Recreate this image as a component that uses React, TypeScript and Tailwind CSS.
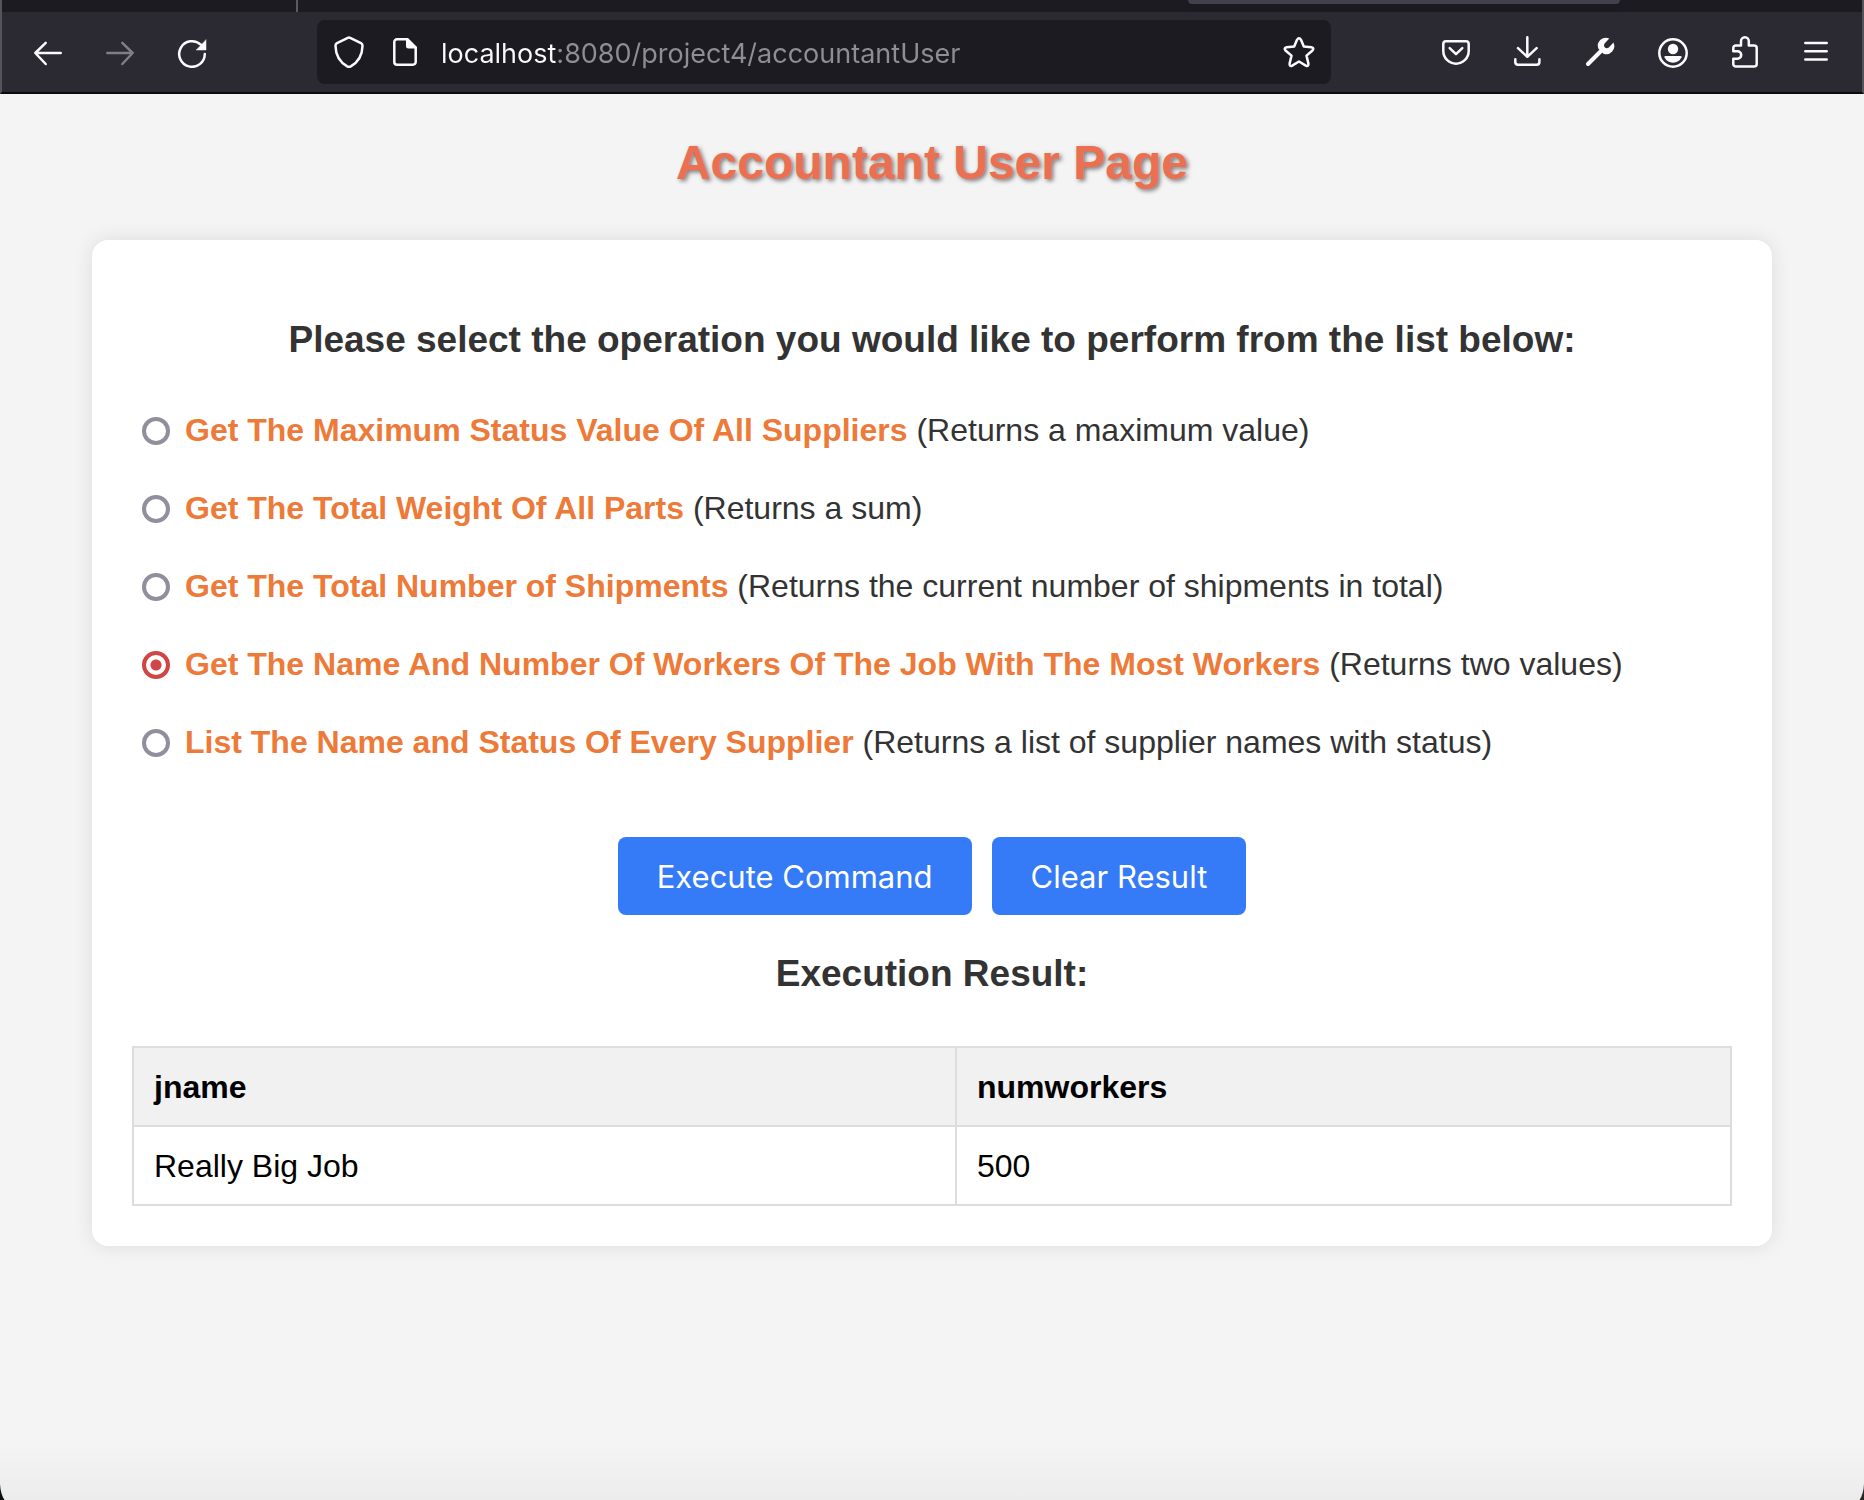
import { useState, type ReactNode } from "react";

const operations = [
  { id: "max-status", name: "Get The Maximum Status Value Of All Suppliers", note: "(Returns a maximum value)" },
  { id: "total-weight", name: "Get The Total Weight Of All Parts", note: "(Returns a sum)" },
  { id: "total-shipments", name: "Get The Total Number of Shipments", note: "(Returns the current number of shipments in total)" },
  { id: "most-workers", name: "Get The Name And Number Of Workers Of The Job With The Most Workers", note: "(Returns two values)" },
  { id: "list-suppliers", name: "List The Name and Status Of Every Supplier", note: "(Returns a list of supplier names with status)" },
];

function Icon({ children }: { children: ReactNode }) {
  return (
    <svg
      viewBox="0 0 32 32"
      className="size-8 shrink-0"
      fill="none"
      stroke="currentColor"
      strokeWidth="2.5"
      strokeLinecap="round"
      strokeLinejoin="round"
      aria-hidden="true"
    >
      {children}
    </svg>
  );
}

function ToolButton({ label, disabled, children }: { label: string; disabled?: boolean; children: ReactNode }) {
  return (
    <button
      type="button"
      aria-label={label}
      disabled={disabled}
      className="flex h-16 w-18 items-center justify-center text-[#fbfbfe] disabled:text-[#7f7e85]"
    >
      <Icon>{children}</Icon>
    </button>
  );
}

function BrowserBar() {
  return (
    <header className="border-x-2 border-b-2 border-x-[#55545b] border-b-[#0c0c0d] bg-[#2b2a33]">
      <div className="flex h-3 items-start bg-[#1c1b22]">
        <div className="h-3 w-74 border-r-2 border-[#5b5a62]" />
        <div className="flex-1" />
        <div className="mr-[242px] h-1 w-108 rounded-b-lg bg-[#42414d] shadow-md" />
      </div>
      <div className="flex h-20 items-center px-[10px]">
        <ToolButton label="Back">
          <path d="M28.7 17H3.5M13.7 6.8 3.3 17l10.4 11" />
        </ToolButton>
        <ToolButton label="Forward" disabled>
          <path d="M3.3 17h25.2M18.3 6.8 28.7 17 18.3 28" />
        </ToolButton>
        <ToolButton label="Reload">
          <path d="M28.8 18a12.8 12.8 0 1 1-4-9.3" />
          <path d="M30 4v10H20.500z" fill="currentColor" stroke="currentColor" strokeWidth="0.5" />
        </ToolButton>
        <div className="mx-[89px] flex h-16 min-w-0 flex-1 items-center rounded-lg bg-[#1c1b22] px-4 text-[#fbfbfe]">
          <button type="button" aria-label="Tracking protection">
            <Icon>
              <path d="M14.800 1.900q1.200-.8 2.400 0l10.800 5.300q1.600.9 1.500 2.800c-.2 8.500-4 16-11.700 20.300q-1.800.8-3.600 0C6.500 26 2.700 18.500 2.500 10q-.1-1.900 1.500-2.800z" />
            </Icon>
          </button>
          <button type="button" aria-label="Site information" className="ml-6">
            <Icon>
              <path d="M17 3.300H8a2.700 2.700 0 0 0-2.700 2.700v20A2.700 2.700 0 0 0 8 28.700h16a2.700 2.700 0 0 0 2.700-2.700V12" />
              <path d="M17 2h2l9 9v1.500h-8.500A2.500 2.500 0 0 1 17 10z" fill="currentColor" stroke="none" />
            </Icon>
          </button>
          <input
            aria-label="Address"
            defaultValue="localhost:8080/project4/accountantUser"
            className="ml-5 min-w-0 flex-1 bg-linear-to-r from-[#fbfbfe] from-[115px] to-[#8f8e94] to-[115px] bg-clip-text pt-[3px] font-['Inter',sans-serif] text-[27px] leading-10 text-transparent outline-none"
          />
          <button type="button" aria-label="Bookmark this page">
            <Icon>
              <path d="M14 3.800q2-3.200 4 0l2.800 6.700 7.500.8q3.300.6 1.200 3.200l-6 5.100 1.900 8q.2 3.400-2.600 2L16 25.500l-6.800 4.100q-2.800 1.400-2.600-2l1.900-8-6-5.100q-2.100-2.600 1.200-3.200l7.500-.8z" />
            </Icon>
          </button>
        </div>
        <ToolButton label="Save to Pocket">
          <path d="M6 5.300h20a2.700 2.700 0 0 1 2.700 2.700v7a12.700 12.700 0 0 1-25.400 0V8A2.700 2.700 0 0 1 6 5.300z" />
          <path d="m9.700 12.200 6.300 6 6.300-6" />
        </ToolButton>
        <ToolButton label="Downloads">
          <path d="M15.300 1.300V20M6 12.200l9.300 8.600 9.300-8.600M3.300 23.300V26A2.700 2.700 0 0 0 6 28.700h18.700a2.700 2.700 0 0 0 2.700-2.700v-2.700" />
        </ToolButton>
        <ToolButton label="Developer tools">
          <path d="M4 28 17 15" strokeWidth="4" />
          <path
            d="M25.300 2.600 20.800 7.200q-1.300 1.600-.6 3.400.7 1.600 2.600 1.700 1.300 0 2.300-1L29.400 6.600A8 8 0 0 1 19.500 17.700L14.300 12.500A8 8 0 0 1 25.300 2.600z"
            fill="currentColor"
            stroke="none"
          />
        </ToolButton>
        <ToolButton label="Account">
          <circle cx="17" cy="17" r="13.700" />
          <circle cx="17" cy="13" r="5.200" fill="currentColor" stroke="none" />
          <path d="M9.500 20h15q1.500 0 1 1.300-2.500 5.400-8.500 5.400t-8.500-5.400Q8 20 9.500 20z" fill="currentColor" stroke="none" />
        </ToolButton>
        <ToolButton label="Extensions">
          <path d="M13 9.500V5.200a3.900 3.900 0 0 1 7.800 0v4.300h5.400a2.500 2.500 0 0 1 2.500 2.500v16a2.500 2.500 0 0 1-2.500 2.500H7.800A2.500 2.500 0 0 1 5.300 28v-5.300H9.500a3.700 3.700 0 0 0 0-7.400H5.300V12a2.500 2.500 0 0 1 2.500-2.500z" />
        </ToolButton>
        <ToolButton label="Open menu">
          <path d="M5.300 7h21.400M5.300 15.300h21.400M5.300 23.600h21.400" />
        </ToolButton>
      </div>
    </header>
  );
}

const buttonClass = "h-[78px] rounded-lg bg-[#357af6] px-[39px] pt-[2px] font-['Inter',sans-serif] text-[31px] text-white";

export default function App() {
  const [selected, setSelected] = useState("most-workers");

  return (
    <div className="relative flex min-h-screen flex-col bg-[#f4f4f4] font-['Liberation_Sans',Arial,sans-serif] text-[32px] text-[#333]">
      <BrowserBar />
      <main className="flex-1 px-23 pt-[41px]">
        <h1 className="text-center text-5xl leading-14 font-bold text-[#eb7051] [text-shadow:2px_2px_4px_rgba(0,0,0,0.5)]">
          Accountant User Page
        </h1>
        <section className="mt-[49px] rounded-2xl bg-white px-10 pt-[78px] pb-10 shadow-[0_0_20px_rgba(0,0,0,0.1)]">
          <form onSubmit={(e) => e.preventDefault()}>
            <h2 className="text-center text-[37px] leading-11 font-bold">
              Please select the operation you would like to perform from the list below:
            </h2>
            <div className="mt-[29px]">
              {operations.map((op) => (
                <div key={op.id} className="flex h-[78px] items-center pl-[10px]">
                  <input
                    type="radio"
                    id={op.id}
                    name="operation"
                    checked={selected === op.id}
                    onChange={() => setSelected(op.id)}
                    className="mt-[2px] size-7 shrink-0 appearance-none rounded-full border-4 border-[#8f8f9d] bg-white checked:border-[#d04545] checked:bg-[radial-gradient(circle,#d04545_5px,white_6px)]"
                  />
                  <label htmlFor={op.id} className="ml-[15px]">
                    <strong className="text-[#ed7a38]">{op.name}</strong> {op.note}
                  </label>
                </div>
              ))}
            </div>
            <div className="mt-14 flex justify-center gap-5">
              <button type="submit" className={buttonClass}>
                Execute Command
              </button>
              <button type="button" className={buttonClass}>
                Clear Result
              </button>
            </div>
          </form>
          <h2 className="mt-[37px] text-center text-[37px] leading-11 font-bold">Execution Result:</h2>
          <table className="mt-[50px] w-full table-fixed border-collapse text-left text-black">
            <thead>
              <tr className="h-[79px] bg-[#f1f1f1]">
                <th className="w-[51.5%] border-2 border-[#ddd] px-5 font-bold">jname</th>
                <th className="border-2 border-[#ddd] px-5 font-bold">numworkers</th>
              </tr>
            </thead>
            <tbody>
              <tr className="h-[79px]">
                <td className="border-2 border-[#ddd] px-5">Really Big Job</td>
                <td className="border-2 border-[#ddd] px-5">500</td>
              </tr>
            </tbody>
          </table>
        </section>
      </main>
      <div className="h-14 bg-linear-to-b from-[#f4f4f4] to-[#ececec]" />
      {/* Rounded window corners */}
      <svg viewBox="0 0 5 16" className="absolute bottom-0 left-0 h-4 w-[5px]" aria-hidden="true">
        <path d="M0 0q.5 10 4.500 16H0z" fill="#0b1210" />
      </svg>
      <svg viewBox="0 0 5 16" className="absolute right-0 bottom-0 h-4 w-[5px]" aria-hidden="true">
        <path d="M5 0q-.5 10-4.500 16H5z" fill="#2a2724" />
      </svg>
    </div>
  );
}
